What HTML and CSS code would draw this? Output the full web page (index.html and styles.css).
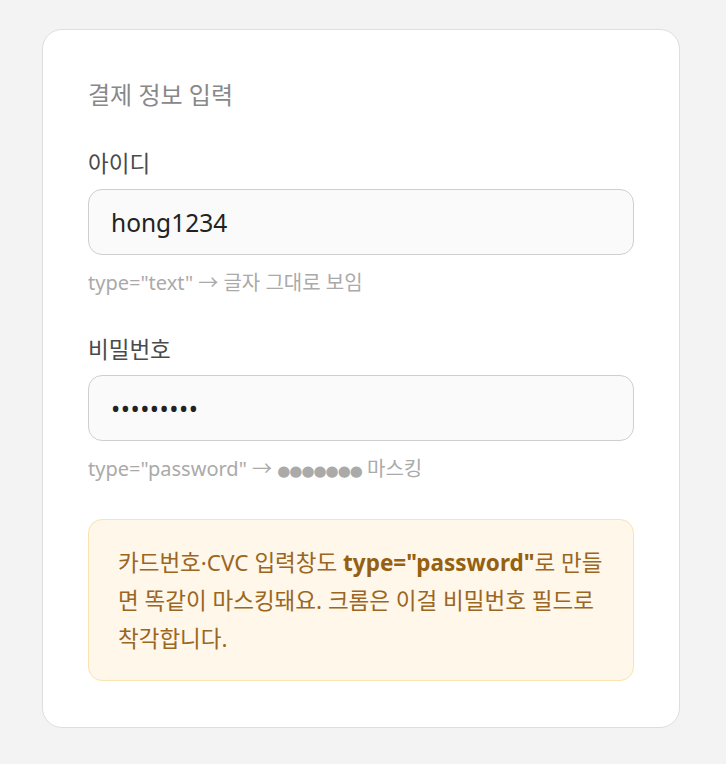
FILE: index.html
```html
<!DOCTYPE html>
<html lang="ko">
<head>
<meta charset="utf-8">
<title>결제 정보 입력</title>
<link rel="stylesheet" href="styles.css">
</head>
<body>
<div class="card">
  <h2 class="title">결제 정보 입력</h2>
  <div class="field field-first">
    <label class="label" for="uid">아이디</label>
    <input class="input" id="uid" type="text" value="hong1234" readonly>
    <p class="hint">type="text" → 글자 그대로 보임</p>
  </div>
  <div class="field field-last">
    <label class="label" for="pw">비밀번호</label>
    <input class="input pw" id="pw" type="password" value="secret123" readonly>
    <p class="hint">type="password" → <span class="dots">●●●●●●●</span> 마스킹</p>
  </div>
  <div class="note">
    카드번호·CVC 입력창도 <strong>type="password"</strong>로 만들면 똑같이 마스킹돼요. 크롬은 이걸 비밀번호 필드로 착각합니다.
  </div>
</div>
</body>
</html>
```
FILE: styles.css
```css
html, body {
  margin: 0;
  padding: 0;
  background: #f3f3f3;
}
body {
  font-family: "Noto Sans", "Noto Sans CJK KR", sans-serif;
  padding: 29px 0 38px 42px;
}
.card {
  box-sizing: border-box;
  width: 638px;
  background: #fff;
  border: 1px solid #dedede;
  border-radius: 20px;
  padding: 50px 45px 46px;
}
.title {
  margin: 0 0 40px;
  font-size: 24px;
  line-height: 30px;
  font-weight: 400;
  color: #888;
}
.field {
  display: flex;
  flex-direction: column;
}
.field-first {
  margin-bottom: 41px;
}
.field-last {
  margin-bottom: 35px;
}
.label {
  font-size: 22.5px;
  line-height: 27px;
  color: #4a4a4a;
  margin-bottom: 12px;
}
.input {
  box-sizing: border-box;
  width: 100%;
  height: 66px;
  border: 1px solid #cfcfcf;
  border-radius: 14px;
  background: #fafafa;
  padding: 0 22px;
  font-family: "Noto Sans", "Noto Sans CJK KR", sans-serif;
  font-size: 24.5px;
  color: #222;
  outline: none;
}
.pw {
  letter-spacing: 0.5px;
}
.hint {
  margin: 15px 0 0;
  font-size: 20px;
  line-height: 25px;
  color: #aaa;
}
.dots {
  font-family: "DejaVu Sans", sans-serif;
  font-size: 15px;
  letter-spacing: -1px;
}
.note {
  background: #fef7ea;
  border: 1px solid #fbe3b0;
  border-radius: 14px;
  padding: 24px 29px 22px;
  font-size: 22.5px;
  line-height: 38px;
  color: #9a6622;
}
.note strong {
  font-weight: 700;
  color: #95600f;
}
```
